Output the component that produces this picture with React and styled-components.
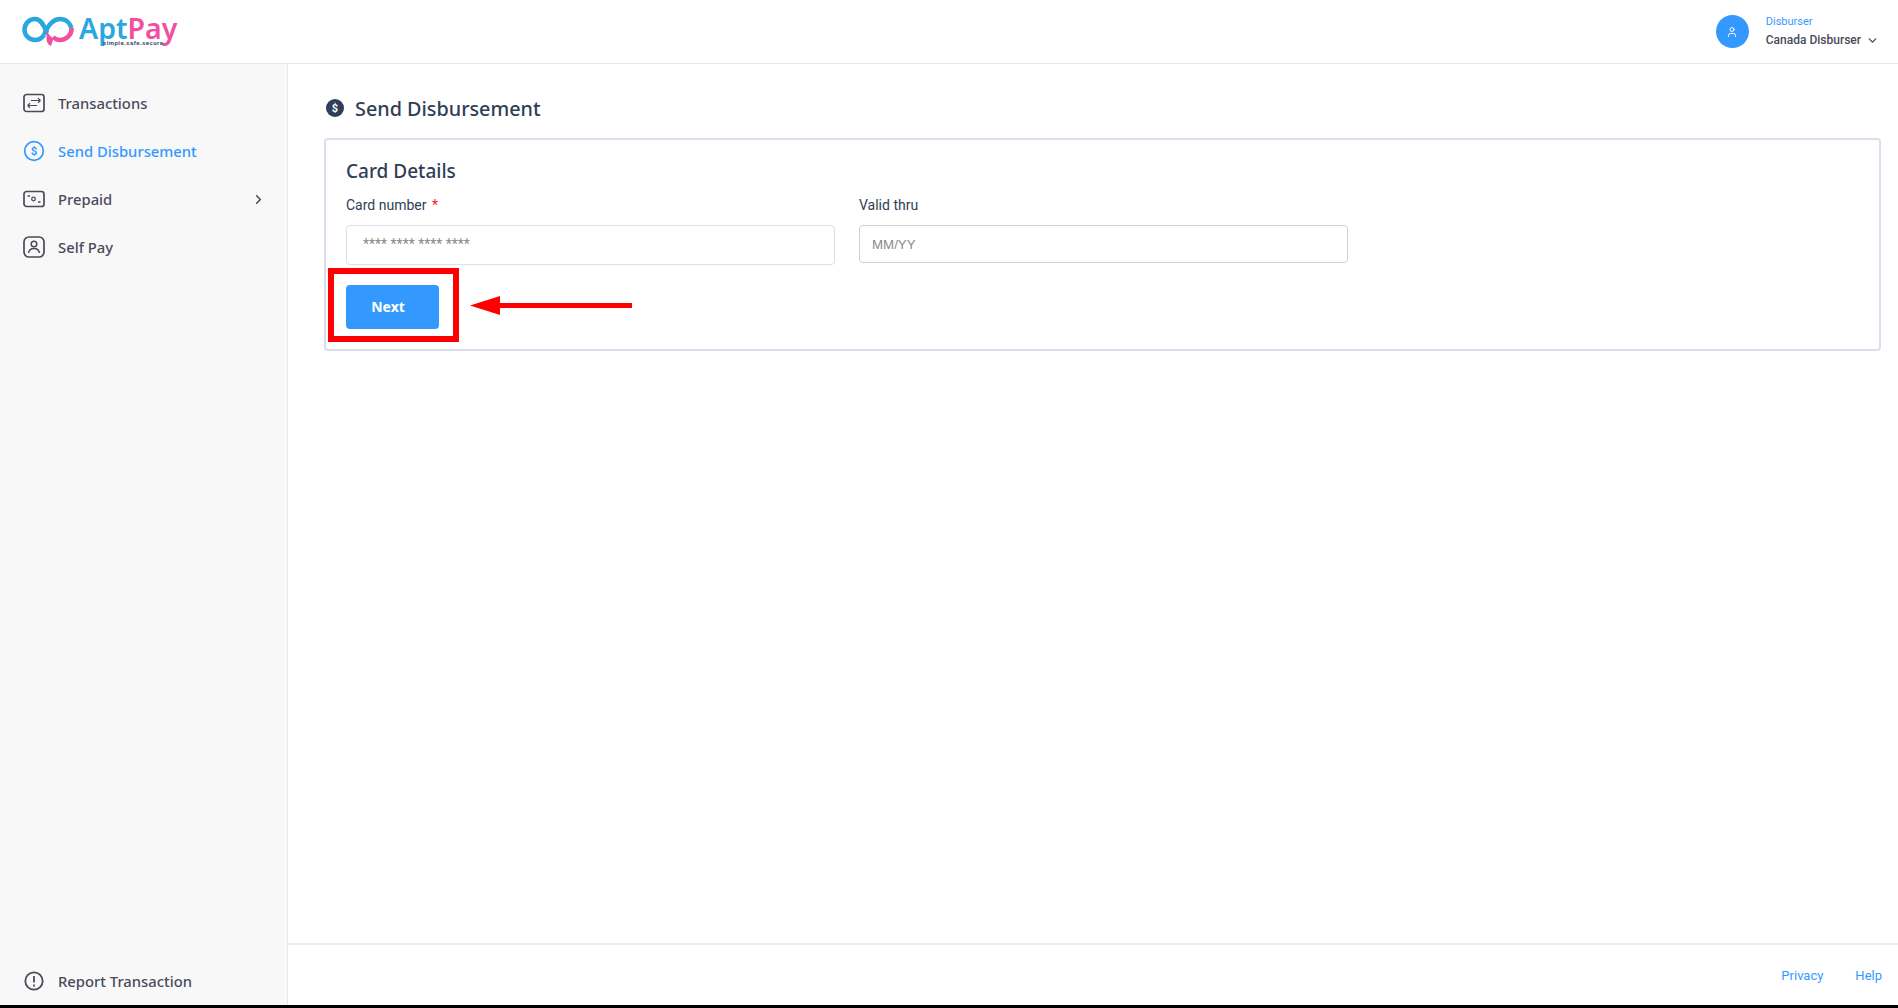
import styled, { createGlobalStyle } from "styled-components";
import { ChevronDown, ChevronRight, User } from "lucide-react";

const GlobalStyle = createGlobalStyle`
  html, body {
    margin: 0;
    padding: 0;
    height: 100%;
    background: #000;
    overflow: hidden;
  }
  * {
    box-sizing: border-box;
  }
`;

function TransactionsIcon() {
  return (
    <NavSvg viewBox="0 0 22 20">
      <rect x="1" y="1.5" width="20" height="17" rx="2.5" fill="none" stroke="currentColor" strokeWidth="1.7" />
      <path d="M4.500 12.500H14M4.500 12.500l2.500-2.300M4.500 12.500l2.500 2.300M8 7.500h9.500M17.500 7.500l-2.500-2.300M17.500 7.500l-2.500 2.300" fill="none" stroke="currentColor" strokeWidth="1.200" />
    </NavSvg>
  );
}

function DollarIcon() {
  return (
    <NavSvg viewBox="0 0 22 22">
      <circle cx="11" cy="11" r="9.300" fill="none" stroke="currentColor" strokeWidth="1.700" />
      <text x="11" y="15" textAnchor="middle" fontSize="11.500" fontWeight="700" fill="currentColor" fontFamily="Roboto, sans-serif">$</text>
    </NavSvg>
  );
}

function PrepaidIcon() {
  return (
    <NavSvg viewBox="0 0 22 20">
      <rect x="1" y="2.500" width="20" height="15" rx="2.500" fill="none" stroke="currentColor" strokeWidth="1.700" />
      <circle cx="10.500" cy="10" r="1.800" fill="none" stroke="currentColor" strokeWidth="1.300" />
      <path d="M4.500 7h2.500M15 13h2.500" stroke="currentColor" strokeWidth="1.500" />
    </NavSvg>
  );
}

function SelfPayIcon() {
  return (
    <NavSvg viewBox="0 0 22 22">
      <rect x="1" y="1" width="20" height="20" rx="5" fill="none" stroke="currentColor" strokeWidth="1.700" />
      <circle cx="11" cy="8" r="2.800" fill="none" stroke="currentColor" strokeWidth="1.500" />
      <path d="M5.500 17c.5-3 2.500-4.500 5.500-4.500s5 1.500 5.500 4.500" fill="none" stroke="currentColor" strokeWidth="1.500" />
    </NavSvg>
  );
}

function AlertIcon() {
  return (
    <NavSvg viewBox="0 0 22 22">
      <circle cx="11" cy="11" r="8.700" fill="none" stroke="currentColor" strokeWidth="1.800" />
      <path d="M11 6v6.500M11 14.500v2" stroke="currentColor" strokeWidth="1.800" />
    </NavSvg>
  );
}

function LogoMark() {
  return (
    <svg width="52" height="30" viewBox="0 0 52 30">
      <path d="M25 17C22 9 19 3 13 3a10.500 10.500 0 1 0 0 21c4 0 7-2 9-5" fill="none" stroke="#2ba6de" strokeWidth="4.500" />
      <path d="M22 19C26 9 31 3 38 3c6 0 10 4 11.500 9" fill="none" stroke="#2ba6de" strokeWidth="4.500" />
      <path d="M49.500 12c.5 7-5.500 12-11.500 12-3 0-5-1-7-3" fill="none" stroke="#f0509f" strokeWidth="4.500" />
      <path d="M25 15c2 4 4 6 6.500 7.500L29 30c-3-1-4.500-4-4.500-8z" fill="#f0509f" />
    </svg>
  );
}

const navItems = [
  { label: "Transactions", icon: <TransactionsIcon /> },
  { label: "Send Disbursement", icon: <DollarIcon />, active: true },
  { label: "Prepaid", icon: <PrepaidIcon />, more: true },
  { label: "Self Pay", icon: <SelfPayIcon /> },
];

export default function App() {
  return (
    <Page>
      <GlobalStyle />
      <Header>
        <Logo>
          <LogoMark />
          <LogoWords>
            <LogoName>
              Apt<LogoPink>Pay</LogoPink>
            </LogoName>
            <LogoTag>simple.safe.secure</LogoTag>
          </LogoWords>
        </Logo>
        <Account>
          <Avatar>
            <User size={12} strokeWidth={2} />
          </Avatar>
          <AccountText>
            <Role>Disburser</Role>
            <AccountName>
              Canada Disburser
              <ChevronDown size={13} strokeWidth={2.5} />
            </AccountName>
          </AccountText>
        </Account>
      </Header>
      <Body>
        <Sidebar>
          <Nav>
            {navItems.map((item) => (
              <NavItem key={item.label} $active={item.active}>
                {item.icon}
                <NavLabel>{item.label}</NavLabel>
                {item.more && <ChevronRight size={15} strokeWidth={2.5} />}
              </NavItem>
            ))}
          </Nav>
          <NavItem>
            <AlertIcon />
            <NavLabel>Report Transaction</NavLabel>
          </NavItem>
        </Sidebar>
        <Main>
          <Content>
            <Title>
              <TitleIcon>$</TitleIcon>
              Send Disbursement
            </Title>
            <Card>
              <CardTitle>Card Details</CardTitle>
              <Fields>
                <Field>
                  <Label>
                    Card number <Required>*</Required>
                  </Label>
                  <CardInput placeholder="**** **** **** ****" />
                </Field>
                <Field>
                  <Label>Valid thru</Label>
                  <DateInput placeholder="MM/YY" />
                </Field>
              </Fields>
              <NextWrap>
                <NextButton>Next</NextButton>
                <Highlight />
                <Arrow width="162" height="20" viewBox="0 0 162 20">
                  <path d="M0 9.500L30 0v7h132v5H30v7z" fill="#ff0000" />
                </Arrow>
              </NextWrap>
            </Card>
          </Content>
          <Footer>
            <FooterLink>Privacy</FooterLink>
            <FooterLink>Help</FooterLink>
          </Footer>
        </Main>
      </Body>
    </Page>
  );
}

const Page = styled.div`
  display: flex;
  flex-direction: column;
  height: 1005px;
  background: #fff;
  color: #2f3e56;
  font-family: "Noto Sans", sans-serif;
`;

const Header = styled.header`
  display: flex;
  align-items: center;
  justify-content: space-between;
  flex: 0 0 64px;
  padding: 0 19px 0 22px;
  border-bottom: 1px solid #e6e7f1;
`;

const Logo = styled.div`
  display: flex;
  align-items: center;
  gap: 5px;
  margin-top: -2px;
`;

const LogoWords = styled.div`
  display: flex;
  flex-direction: column;
  align-items: flex-end;
`;

const LogoName = styled.div`
  height: 24px;
  font-family: "Noto Sans", sans-serif;
  font-size: 28.500px;
  line-height: 24px;
  font-weight: 600;
  color: #2ba6de;
`;

const LogoPink = styled.span`
  color: #f0509f;
`;

const LogoTag = styled.div`
  margin-right: 14px;
  font-family: "Roboto", sans-serif;
  font-size: 6px;
  line-height: 6px;
  font-weight: 700;
  letter-spacing: 0.5px;
  color: #40506a;
`;

const Account = styled.div`
  display: flex;
  align-items: center;
  gap: 17px;
`;

const Avatar = styled.div`
  display: flex;
  align-items: center;
  justify-content: center;
  width: 33px;
  height: 33px;
  border-radius: 50%;
  background: #3399ff;
  color: #fff;
`;

const AccountText = styled.div`
  display: flex;
  flex-direction: column;
  gap: 4px;
  font-family: "Roboto", sans-serif;
`;

const Role = styled.div`
  font-size: 11px;
  line-height: 14px;
  color: #3399ff;
`;

const AccountName = styled.div`
  display: flex;
  align-items: center;
  gap: 5px;
  font-size: 12px;
  line-height: 15px;
  font-weight: 500;
  color: #4a4a5a;
`;

const Body = styled.div`
  display: flex;
  flex: 1;
  min-height: 0;
`;

const Sidebar = styled.aside`
  display: flex;
  flex-direction: column;
  justify-content: space-between;
  flex: 0 0 288px;
  padding: 15px 0 0;
  background: #f8f8f9;
  border-right: 1px solid #e6e7f1;
`;

const Nav = styled.nav`
  display: flex;
  flex-direction: column;
`;

const NavItem = styled.div`
  display: flex;
  align-items: center;
  gap: 13px;
  height: 48px;
  padding: 0 21px 0 23px;
  color: ${(props) => (props.$active ? "#3399ff" : "#4a4a5a")};
  font-size: 14.8px;
  font-weight: 500;
`;

const NavSvg = styled.svg`
  flex: 0 0 22px;
  width: 22px;
  height: 22px;
`;

const NavLabel = styled.span`
  flex: 1;
`;

const Main = styled.main`
  display: flex;
  flex-direction: column;
  flex: 1;
  min-width: 0;
`;

const Content = styled.div`
  flex: 1;
  padding: 32px 17px 0 36px;
`;

const Title = styled.h1`
  display: flex;
  align-items: center;
  gap: 11px;
  height: 24px;
  margin: 0 0 18px;
  padding-left: 2px;
  font-size: 19.8px;
  font-weight: 500;
  color: #2f3e56;
`;

const TitleIcon = styled.span`
  display: flex;
  align-items: center;
  justify-content: center;
  width: 18px;
  height: 18px;
  border-radius: 50%;
  background: #2f3e56;
  color: #fff;
  font-family: "Roboto", sans-serif;
  font-size: 11px;
  font-weight: 700;
`;

const Card = styled.section`
  height: 213px;
  padding: 18px 20px;
  border: 2px solid #dcdeeb;
  border-radius: 4px;
`;

const CardTitle = styled.h2`
  margin: 0 0 13px;
  font-size: 19px;
  line-height: 26px;
  font-weight: 500;
  color: #2f3e56;
`;

const Fields = styled.div`
  display: flex;
  gap: 24px;
  align-items: flex-start;
`;

const Field = styled.div`
  display: flex;
  flex-direction: column;
  gap: 12px;
  width: 489px;
`;

const Label = styled.label`
  font-family: "Roboto", sans-serif;
  font-size: 14px;
  line-height: 16px;
  color: #2f3e56;
`;

const Required = styled.span`
  margin-left: 2px;
  color: #f5222d;
`;

const CardInput = styled.input`
  width: 100%;
  height: 40px;
  padding: 0 16px 2px;
  border: 1px solid #dcdeeb;
  border-radius: 4px;
  outline: none;
  font-family: "Roboto", sans-serif;
  font-size: 14px;

  &::placeholder {
    color: #8a8a8a;
    opacity: 1;
  }
`;

const DateInput = styled.input`
  width: 100%;
  height: 38px;
  padding: 0 12px;
  border: 1px solid #ced0dc;
  border-radius: 4px;
  outline: none;
  font-family: "Liberation Sans", sans-serif;
  font-size: 13.3px;

  &::placeholder {
    color: #8a8a8a;
    opacity: 1;
  }
`;

const NextWrap = styled.div`
  position: relative;
  margin-top: 20px;
  width: 93px;
`;

const NextButton = styled.button`
  display: block;
  width: 93px;
  height: 44px;
  padding: 0 9px 2px 0;
  border: 0;
  border-radius: 4px;
  background: #3399ff;
  color: #fff;
  font-family: "Noto Sans", sans-serif;
  font-size: 14px;
  font-weight: 700;
`;

const Highlight = styled.div`
  position: absolute;
  left: -18px;
  top: -17px;
  width: 131px;
  height: 74px;
  border: 6px solid #ff0000;
`;

const Arrow = styled.svg`
  position: absolute;
  left: 124px;
  top: 11px;
`;

const Footer = styled.footer`
  display: flex;
  align-items: center;
  justify-content: flex-end;
  gap: 32px;
  flex: 0 0 62px;
  padding: 0 16px 0 0;
  border-top: 2px solid #e9edf2;
`;

const FooterLink = styled.a`
  font-family: "Roboto", sans-serif;
  font-size: 13px;
  color: #3399ff;
`;
